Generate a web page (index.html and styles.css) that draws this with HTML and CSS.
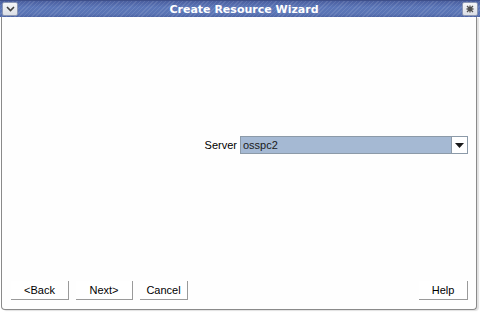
FILE: index.html
```html
<!DOCTYPE html>
<html>
<head>
<meta charset="utf-8">
<link rel="stylesheet" href="styles.css">
</head>
<body>
<div class="window">
  <div class="titlebar">
    <div class="tbtn">
      <svg width="9" height="6" viewBox="0 0 9 6"><path d="M1 1 L4.5 4.5 L8 1" fill="none" stroke="#404040" stroke-width="1.6"/></svg>
    </div>
    <div class="title">Create Resource Wizard</div>
    <div class="tbtn">
      <svg width="8" height="8" viewBox="0 0 8 8"><path d="M1 1 L7 7 M7 1 L1 7 M4 0.5 L4 7.5 M0.5 4 L7.5 4" fill="none" stroke="#505050" stroke-width="1.3"/></svg>
    </div>
  </div>
  <div class="body">
    <div class="content">
      <div class="form-row">
        <span class="label">Server</span>
        <div class="combo">
          <span class="combo-text">osspc2</span>
          <span class="combo-arrow">
            <svg width="9" height="5" viewBox="0 0 9 5"><path d="M0 0 H9 L4.5 5 Z" fill="#1a1a1a"/></svg>
          </span>
        </div>
      </div>
      <div class="buttons">
        <div class="group">
          <button class="btn b-back">&lt;Back</button>
          <button class="btn b-next">Next&gt;</button>
          <button class="btn b-cancel">Cancel</button>
        </div>
        <button class="btn b-help">Help</button>
      </div>
    </div>
  </div>
</div>
</body>
</html>
```
FILE: styles.css
```css
html, body {
  margin: 0;
  padding: 0;
  background: #ffffff;
}
.window {
  width: 480px;
  height: 312px;
  box-sizing: border-box;
  display: flex;
  flex-direction: column;
  font-family: "Liberation Sans", Arial, sans-serif;
  font-size: 11px;
  color: #000;
}
.titlebar {
  height: 17px;
  box-sizing: border-box;
  display: flex;
  align-items: center;
  padding: 0 2px 0 2px;
  background:
    repeating-linear-gradient(135deg, rgba(255,255,255,0.10) 0 1px, rgba(0,0,0,0) 1px 3px),
    linear-gradient(#4a5e9e, #5b76b8 40%, #5a74b4 80%, #4c64a4);
  border-top: 1px solid #3e4f8a;
}
.tbtn {
  width: 16px;
  height: 14px;
  box-sizing: border-box;
  border: 1px solid #8c97b4;
  border-radius: 2px;
  background: linear-gradient(#f4f5f8, #dcdfe6);
  display: flex;
  align-items: center;
  justify-content: center;
}
.title {
  flex: 1;
  text-align: center;
  font-family: "DejaVu Sans", sans-serif;
  font-weight: bold;
  font-size: 11px;
  color: #ffffff;
  line-height: 15px;
  padding-left: 8px;
}
.body {
  flex: 1;
  display: flex;
  border-left: 1px solid #8a8a8a;
  border-right: 1px solid #8a8a8a;
  border-bottom: 1px solid #8a8a8a;
  border-bottom-left-radius: 4px;
  border-bottom-right-radius: 4px;
  margin-left: 1px;
  margin-right: 3px;
  margin-bottom: 2px;
  box-shadow: 2px 1px 1px rgba(0,0,0,0.12);
  background: #fefefe;
}
.content {
  flex: 1;
  display: flex;
  flex-direction: column;
  padding: 0 8px 0 9px;
}
.form-row {
  margin-top: 119px;
  display: flex;
  align-items: center;
  justify-content: flex-end;
  gap: 3px;
}
.label {
  line-height: 18px;
}
.combo {
  width: 228px;
  height: 18px;
  box-sizing: border-box;
  border: 1px solid #8c9aa8;
  background: #a5b9d3;
  display: flex;
  align-items: center;
}
.combo-text {
  flex: 1;
  padding-left: 2px;
  color: #1a1a1a;
}
.combo-arrow {
  width: 16px;
  height: 16px;
  box-sizing: border-box;
  border-left: 1px solid #8c9aa8;
  background: #ffffff;
  display: flex;
  align-items: center;
  justify-content: center;
}
.buttons {
  margin-top: 127px;
  display: flex;
  justify-content: space-between;
  align-items: center;
}
.group {
  display: flex;
  gap: 7px;
}
.btn {
  height: 19px;
  box-sizing: border-box;
  border: none;
  border-right: 1px solid #9a9a9a;
  border-bottom: 1px solid #9a9a9a;
  background: #ffffff;
  font-family: "Liberation Sans", Arial, sans-serif;
  font-size: 11px;
  color: #000;
  padding: 0;
  margin: 0;
}
.b-back { width: 58px; }
.b-next { width: 57px; }
.b-cancel { width: 48px; }
.b-help { width: 49px; }
```
